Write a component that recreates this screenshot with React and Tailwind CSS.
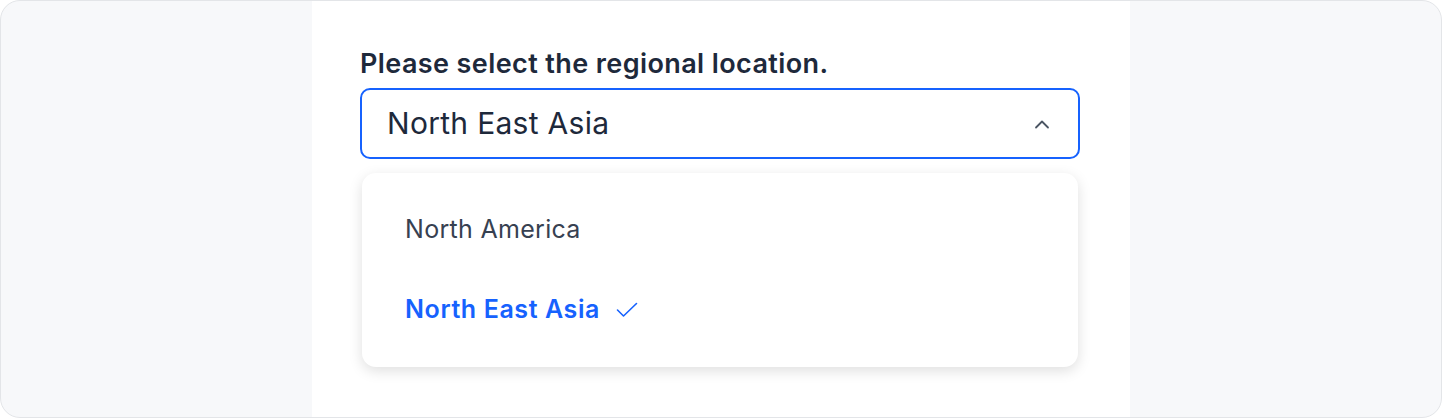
import React from "react"

const font = { fontFamily: "Inter, 'Noto Sans', sans-serif" }

const ChevronUp = () => (
    <svg width="16" height="10" viewBox="0 0 16 10" fill="none">
        <path d="M2 8.5 L8 2.5 L14 8.5" stroke="#4b5563" strokeWidth="1.8" strokeLinecap="round" strokeLinejoin="round" />
    </svg>
)

const Check = () => (
    <svg width="22" height="16" viewBox="0 0 22 16" fill="none">
        <path d="M1.5 8 L7.5 14 L20.5 1.5" stroke="#1662fe" strokeWidth="1.6" strokeLinecap="round" strokeLinejoin="round" />
    </svg>
)

const options = [
    { label: "North America", selected: false },
    { label: "North East Asia", selected: true },
]

export default function App() {
    return (
        <div className="w-[1442px] h-[418px] overflow-hidden rounded-[20px] border border-[#e3e5e8] bg-[#f7f8fa] flex justify-center" style={font}>
            <div className="w-[818px] h-full bg-white px-[48px] pt-[45px]">
                <label className="block text-[27px] leading-[36px] tracking-[0.4px] font-semibold text-[#1e293b] mb-[6px]">
                    Please select the regional location.
                </label>
                <div className="h-[71px] w-[720px] rounded-[10px] border-2 border-[#1662fe] flex items-center justify-between pl-[25px] pr-[28px]">
                    <span className="text-[30px] tracking-[0.3px] text-[#1e293b]">North East Asia</span>
                    <ChevronUp />
                </div>
                <div className="mt-[14px] mx-[2px] w-[716px] rounded-[14px] bg-white py-[17px] shadow-[0_4px_14px_rgba(0,0,0,0.13)]">
                    {options.map((o) => (
                        <div key={o.label} className="h-[80px] px-[43px] flex items-center gap-[16px]">
                            <span className={o.selected ? "text-[25px] tracking-[0.6px] font-semibold text-[#1662fe]" : "text-[25px] tracking-[0.3px] text-[#374151]"}>
                                {o.label}
                            </span>
                            {o.selected && <Check />}
                        </div>
                    ))}
                </div>
            </div>
        </div>
    )
}
